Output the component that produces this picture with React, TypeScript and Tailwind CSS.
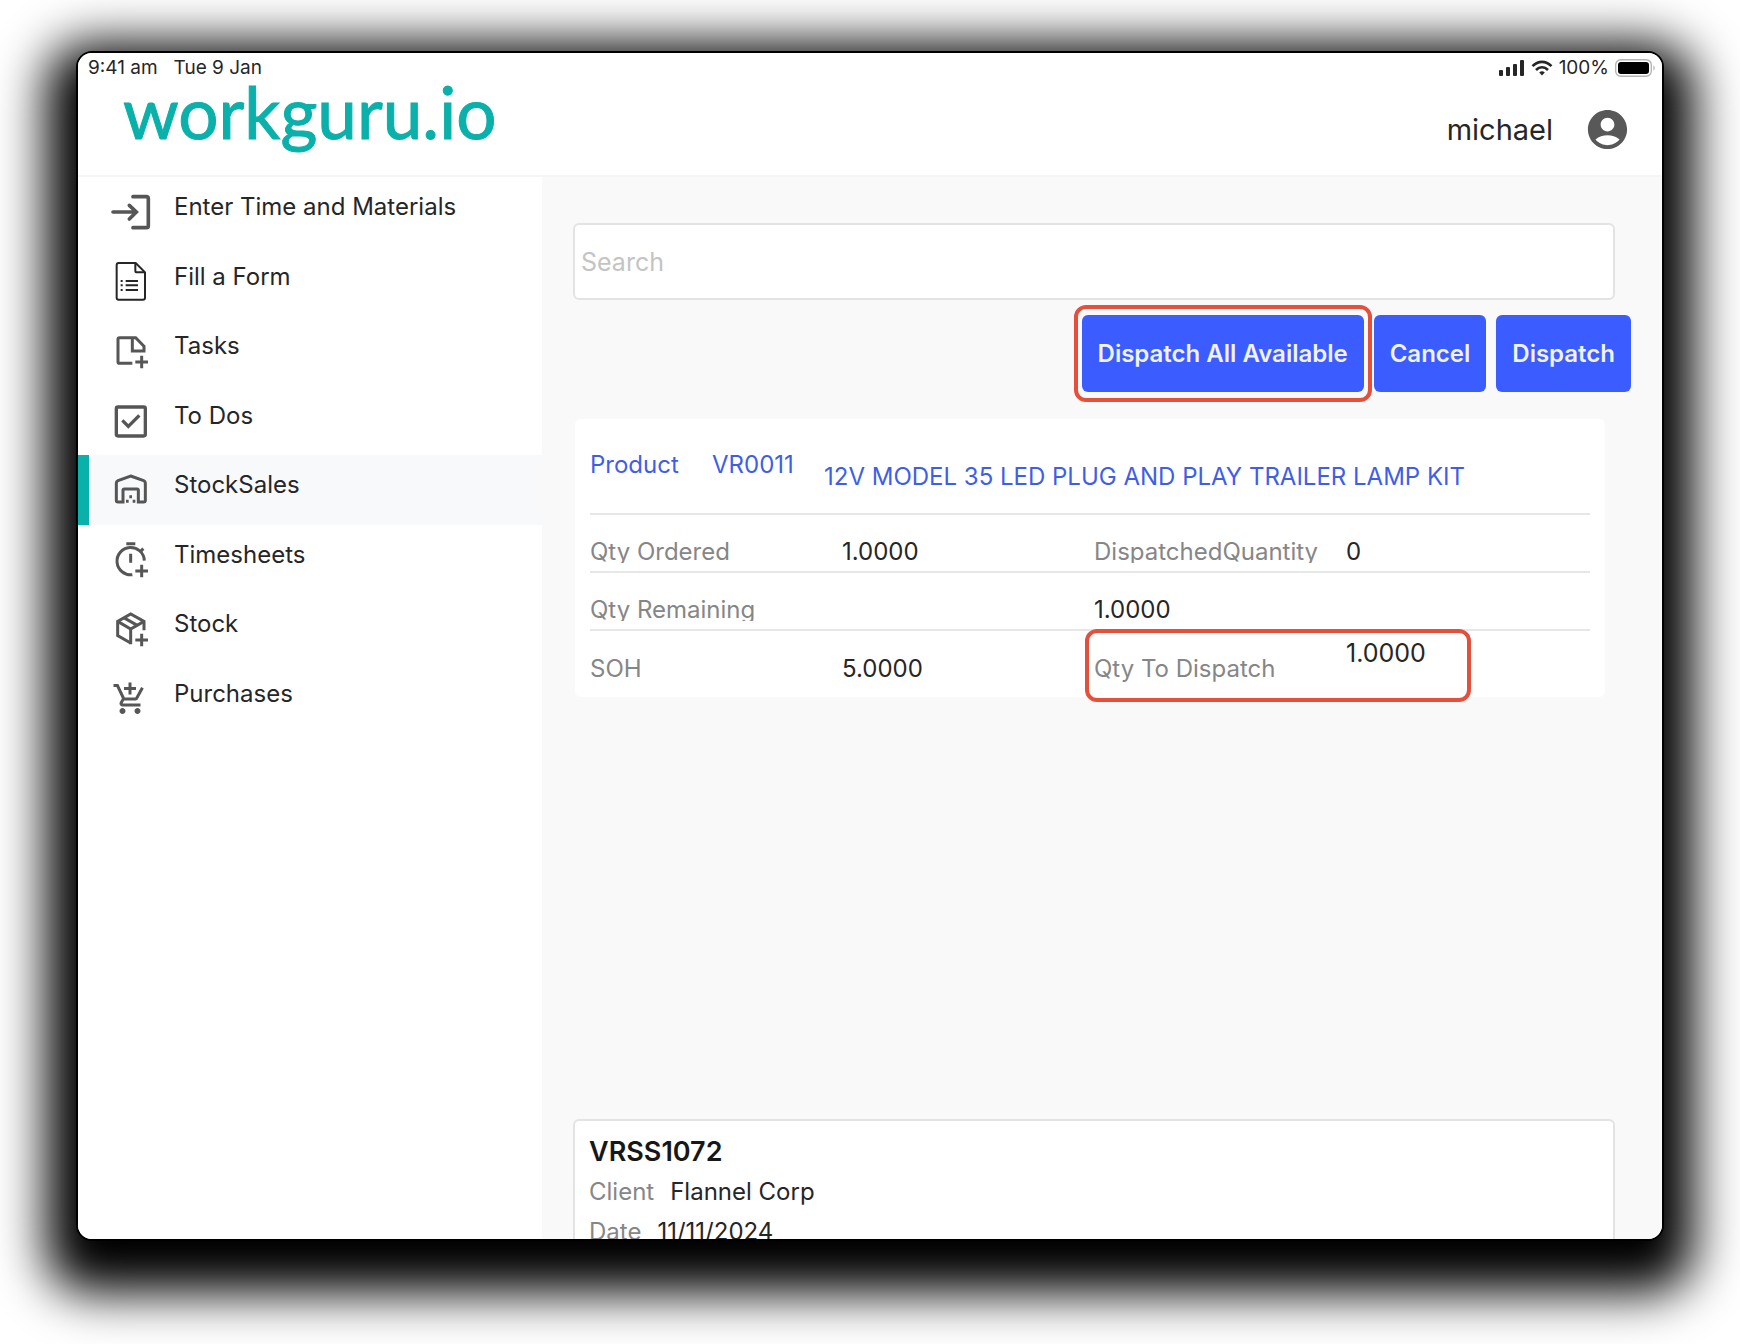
import type { ReactNode } from 'react';
import { MdAccountCircle, MdAddShoppingCart } from 'react-icons/md';

const Glyph = ({ children, width = 9 }: { children: ReactNode; width?: number }) => (
  <svg
    viewBox="0 0 120 120"
    className="w-10 h-10 overflow-visible"
    fill="none"
    stroke="currentColor"
    strokeWidth={width}
    aria-hidden="true"
  >
    {children}
  </svg>
);

const Plus = () => <path d="M76 93H114M95 74V112" />;

const menu = [
  {
    label: 'Enter Time and Materials',
    icon: (
      <Glyph width={11}>
        <path d="M69 14H109Q115 14 115 20V101Q115 107 109 107H69" strokeLinecap="round" />
        <path d="M9 60H78M58 40L79 60L58 81" strokeLinecap="round" />
      </Glyph>
    ),
  },
  {
    label: 'Fill a Form',
    icon: (
      <Glyph width={6}>
        <g className="text-neutral-800" stroke="currentColor">
          <path d="M26 3H77L105 31V107Q105 113 99 113H26Q20 113 20 107V9Q20 3 26 3Z" />
          <path d="M76 3V26Q76 31 81 31H105" />
          <path d="M47 57H84M47 70H84M47 84H84" />
          <path d="M32 57H38M32 70H38M32 84H38" />
        </g>
      </Glyph>
    ),
  },
  {
    label: 'Tasks',
    icon: (
      <Glyph>
        <path d="M67 97H29Q24 97 24 92V25Q24 20 29 20H77L102 46V60H67V20" />
        <Plus />
      </Glyph>
    ),
  },
  {
    label: 'To Dos',
    icon: (
      <Glyph width={10}>
        <rect x="19" y="18" width="87" height="87" rx="5" />
        <path d="M37 58L55 76L88 43" />
      </Glyph>
    ),
  },
  {
    label: 'StockSales',
    active: true,
    icon: (
      <Glyph>
        <path d="M62 18L101 32Q106 34 106 39V91Q106 96 101 96H85V61Q85 57 81 57H43Q39 57 39 61V96H24Q19 96 19 91V39Q19 34 24 32Z" />
        <path d="M58 80H66M48 94H56M68 94H76" />
      </Glyph>
    ),
  },
  {
    label: 'Timesheets',
    icon: (
      <Glyph>
        <path d="M49 11H76M62 41V68" />
        <path d="M67 104A41 41 0 1 1 103 62" />
        <path d="M91 35L100 26" />
        <Plus />
      </Glyph>
    ),
  },
  {
    label: 'Stock',
    icon: (
      <Glyph width={9}>
        <path d="M62 102L23 80V37L62 15L102 37V64" />
        <path d="M23 37L62 60L102 37M62 60V106" />
        <path d="M41 26L82 49" />
        <Plus />
      </Glyph>
    ),
  },
  { label: 'Purchases', icon: <MdAddShoppingCart className="w-9 h-9" /> },
];

const StatusBar = () => (
  <div className="flex items-center justify-between h-[30px] pl-[10px] pr-[6px] text-[19px] leading-[30px] text-neutral-800">
    <div className="flex gap-4">
      <span>9:41 am</span>
      <span>Tue 9 Jan</span>
    </div>
    <div className="flex items-center gap-[6px]">
      <svg viewBox="0 0 26 16" className="w-[26px] h-4" fill="currentColor" aria-hidden="true">
        <rect x="0" y="10" width="4" height="6" rx="1" />
        <rect x="7" y="7" width="4" height="9" rx="1" />
        <rect x="14" y="4" width="4" height="12" rx="1" />
        <rect x="21" y="0" width="4" height="16" rx="1" />
      </svg>
      <svg viewBox="0 0 22 16" className="w-[22px] h-4" fill="none" stroke="currentColor" strokeWidth="2.6" aria-hidden="true">
        <path d="M1.5 6.2C7 0.4 15 0.4 20.500 6.200" />
        <path d="M5 10C8.500 6.400 13.500 6.400 17 10" />
        <path d="M8.200 12.500Q11 10 13.800 12.500L11 15.500Z" fill="currentColor" stroke="none" />
      </svg>
      <span>100%</span>
      <svg viewBox="0 0 41 18" className="w-[41px] h-[18px]" aria-hidden="true">
        <rect x="0.7" y="0.7" width="35.600" height="16.600" rx="5" fill="none" stroke="#b5b5b5" strokeWidth="1.4" />
        <rect x="3" y="3" width="31" height="12" rx="3" fill="#000" />
        <path d="M38.500 6.500Q41 9 38.500 11.500Z" fill="#a3a3a3" />
      </svg>
    </div>
  </div>
);

const Header = () => (
  <header className="shrink-0 bg-white">
    <StatusBar />
    <div className="flex items-start justify-between h-[94px] pl-[45px] pr-[31px] border-b-2 border-[#f5f5f5]">
      <a
        href="#"
        className="font-['Lato'] text-[71px] leading-[58px] text-[#0ab0aa] [-webkit-text-stroke:1px_#0ab0aa]"
      >
        workguru.io
      </a>
      <div className="flex items-center gap-[31px] pt-[23px]">
        <span className="text-[29px] leading-[47px] text-neutral-800">michael</span>
        <button type="button" aria-label="Account" className="text-[#585858]">
          <MdAccountCircle className="w-[47px] h-[47px]" />
        </button>
      </div>
    </div>
  </header>
);

const Sidebar = () => (
  <nav className="w-[464px] shrink-0 bg-white">
    <div className="grid grid-rows-8 h-[556px]">
      {menu.map((item) => (
        <a
          key={item.label}
          href="#"
          className={`flex items-start gap-6 pl-[21px] border-l-11 ${
            item.active ? 'border-[#0ab0aa] bg-[#f8f9fb]' : 'border-transparent'
          }`}
        >
          <span className="flex items-center justify-center w-10 h-10 mt-[15px] text-[#565656]">{item.icon}</span>
          <span className="mt-[14px] text-[24px] leading-8 text-neutral-800">{item.label}</span>
        </a>
      ))}
    </div>
  </nav>
);

const DispatchButton = ({ children }: { children: ReactNode }) => (
  <button type="button" className="h-[77px] px-4 rounded-md bg-[#3b5cff] text-[24px] font-semibold text-[#f0f2ff]">
    {children}
  </button>
);

const Actions = () => (
  <div className="flex justify-end gap-[10px] mt-[15px]">
    <div className="relative">
      <DispatchButton>Dispatch All Available</DispatchButton>
      <div className="absolute -inset-x-2 -inset-y-[10px] border-4 border-[#e5503c] rounded-xl pointer-events-none" />
    </div>
    <DispatchButton>Cancel</DispatchButton>
    <DispatchButton>Dispatch</DispatchButton>
  </div>
);

const Name = ({ children }: { children: ReactNode }) => (
  <span className="h-[27px] overflow-hidden text-[#868686]">{children}</span>
);

const ProductCard = () => (
  <article className="ml-[2px] mr-[26px] mt-[27px] px-[15px] rounded-md bg-white text-[24px] leading-8 text-neutral-800">
    <div className="flex h-24 pt-[30px] border-b-2 border-[#e7e7e7] text-[#3f5ee8]">
      <span className="w-[122px]">Product</span>
      <span className="w-[112px]">VR0011</span>
      <span className="pt-3">12V MODEL 35 LED PLUG AND PLAY TRAILER LAMP KIT</span>
    </div>
    <div className="grid grid-cols-4 gap-x-2 h-[58px] pt-[21px] border-b-2 border-[#e7e7e7]">
      <Name>Qty Ordered</Name>
      <span>1.0000</span>
      <Name>DispatchedQuantity</Name>
      <span>0</span>
    </div>
    <div className="grid grid-cols-2 gap-x-2 h-[58px] pt-[21px] border-b-2 border-[#e7e7e7]">
      <Name>Qty Remaining</Name>
      <span>1.0000</span>
    </div>
    <div className="grid grid-cols-4 gap-x-2 h-[66px]">
      <span className="pt-[22px] text-[#868686]">SOH</span>
      <span className="pt-[22px]">5.0000</span>
      <div className="relative grid grid-cols-2 col-span-2 gap-x-2">
        <label htmlFor="qty" className="pt-[22px] text-[#868686]">Qty To Dispatch</label>
        <input id="qty" defaultValue="1.0000" className="w-full h-8 mt-[6px] text-[25px] outline-none" />
        <div className="absolute -left-[9px] -top-[2px] w-[386px] h-[73px] border-4 border-[#e5503c] rounded-xl pointer-events-none" />
      </div>
    </div>
  </article>
);

const OrderCard = () => (
  <section className="shrink-0 h-[120px] mr-4 px-[14px] pt-[11px] overflow-hidden border-2 border-b-0 border-[#e3e3e3] rounded-t-md bg-white text-[24px] leading-10 text-neutral-800">
    <h2 className="text-[27px] font-semibold text-neutral-900">VRSS1072</h2>
    <div className="flex gap-4">
      <span className="text-[#868686]">Client</span>
      <span>Flannel Corp</span>
    </div>
    <div className="flex gap-4">
      <span className="text-[#868686]">Date</span>
      <span>11/11/2024</span>
    </div>
  </section>
);

export default function App() {
  return (
    <div className="flex flex-col h-screen px-19 pt-[51px] pb-[103px] overflow-hidden bg-white font-['Inter',sans-serif]">
      <div className="flex flex-col flex-1 min-h-0 overflow-hidden border-2 border-black rounded-2xl bg-white shadow-[0_22px_50px_30px_#000]">
        <Header />
        <div className="flex flex-1 min-h-0">
          <Sidebar />
          <main className="flex flex-col flex-1 min-w-0 px-[31px] pt-[46px] bg-[#f9f9f9]">
            <div className="flex-1 min-h-0">
              <div className="mr-4">
                <input
                  type="search"
                  aria-label="Search"
                  placeholder="Search"
                  className="w-full h-[77px] px-[6px] border-2 border-[#e3e3e3] rounded-md bg-white text-[25px] placeholder:text-[#c4c4c4] outline-none"
                />
              </div>
              <Actions />
              <ProductCard />
            </div>
            <OrderCard />
          </main>
        </div>
      </div>
    </div>
  );
}
